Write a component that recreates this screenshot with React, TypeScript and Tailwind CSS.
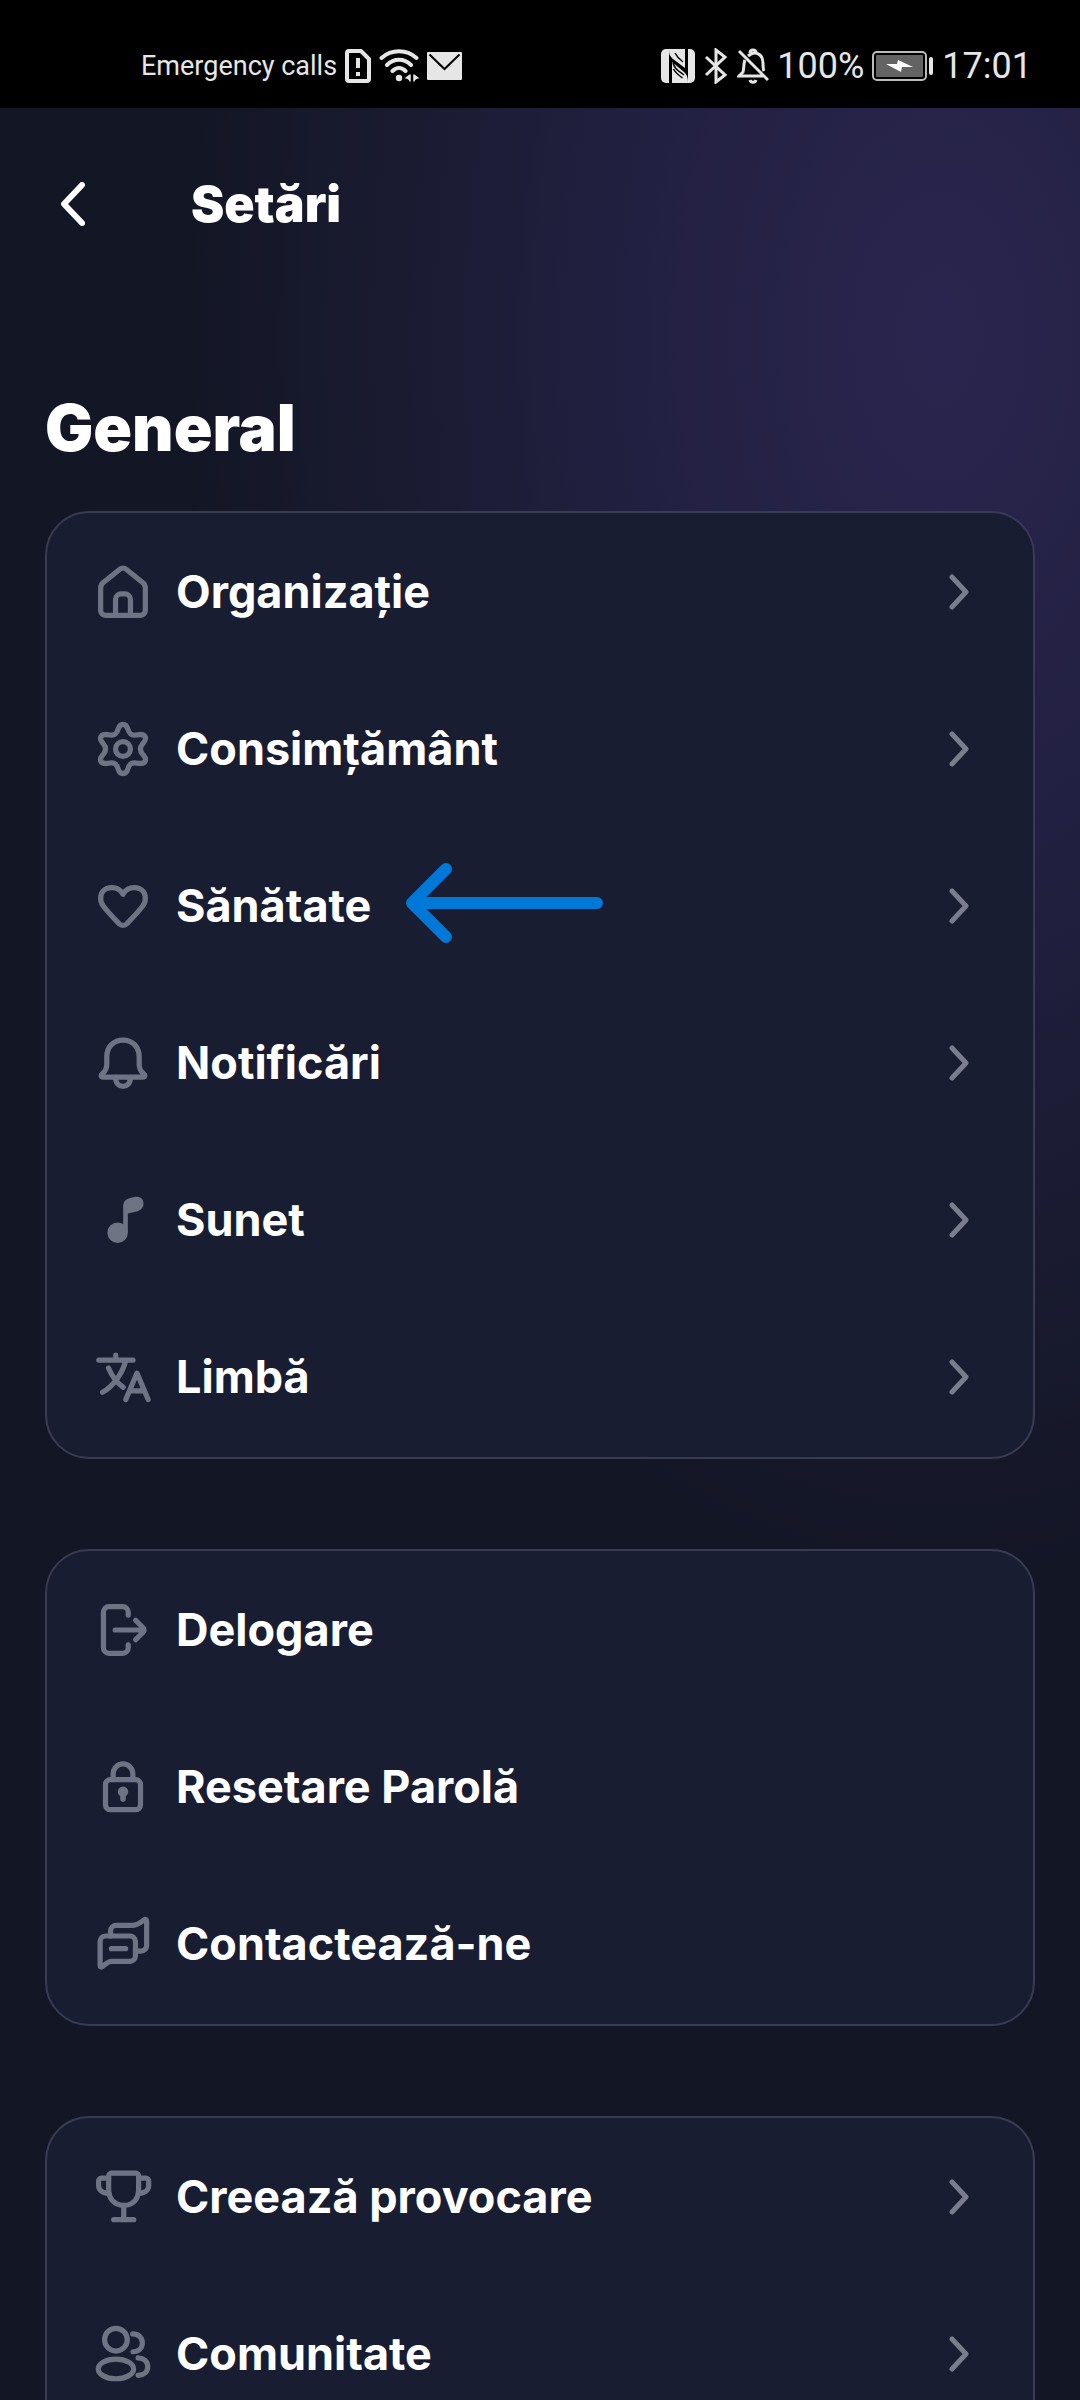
import type { ReactNode } from 'react'

interface Item {
  label: string
  icon: ReactNode
  chevron?: boolean
  marked?: boolean
}

const HomeIcon = () => (
  <>
    <path d="M2.5 24V12.5a4 4 0 0 1 1.3-3l9-7.2a2.6 2.6 0 0 1 3.4 0l9 7.2a4 4 0 0 1 1.3 3v12a2.5 2.5 0 0 1-2.5 2.5H5a2.5 2.5 0 0 1-2.5-2.5Z" />
    <path d="M10.5 27v-8.5a3 3 0 0 1 3-3h2a3 3 0 0 1 3 3V27" />
  </>
)

const GearIcon = () => (
  <>
    <path d="M14.5 1.3c1.6 0 2.1.9 2.6 2.5.8 2.6 1.7 3.6 4.3 3.2 2.3-.4 4.2-.7 5 .9.8 1.5-.2 2.4-1.3 3.7-1.7 2-1.7 3.8 0 5.8 1.100 1.300 2.100 2.200 1.300 3.700-.8 1.600-2.700 1.300-5 .9-2.600-.4-3.500.6-4.300 3.200-.5 1.600-1 2.500-2.600 2.500s-2.100-.9-2.600-2.500c-.8-2.600-1.700-3.600-4.300-3.200-2.300.4-4.200.7-5-.9-.8-1.500.2-2.400 1.300-3.700 1.700-2 1.700-3.800 0-5.800C2.800 10.300 1.800 9.400 2.600 7.900c.8-1.600 2.700-1.300 5-.9 2.600.4 3.500-.6 4.300-3.200.5-1.600 1-2.500 2.600-2.500Z" />
    <circle cx="14.5" cy="14.5" r="4" />
  </>
)

const HeartIcon = () => (
  <path d="M14.5 8.2C12.5 4.400 8.400 4 5.600 5.200c-3.500 1.600-4 6.200-1.700 9.300 2.400 3.200 5.500 6.400 8.500 9.500a2.900 2.900 0 0 0 4.200 0c3-3.100 6.100-6.300 8.500-9.500 2.300-3.100 1.800-7.700-1.700-9.300-2.800-1.200-6.900-.8-8.900 3Z" />
)

const BellIcon = () => (
  <>
    <path d="M14.5 2.200c-5.300 0-8.700 3.800-8.700 9v4c0 2.500-.6 3.500-2 4.700-1.500 1.300-1.300 2.200.2 2.200h21c1.500 0 1.700-.9.200-2.200-1.400-1.200-2-2.200-2-4.700v-4c0-5.200-3.400-9-8.700-9Z" />
    <path d="M10.500 22.200c0 3.300 1.700 4.800 4 4.800s4-1.500 4-4.800" />
  </>
)

const NoteIcon = () => (
  <g fill="currentColor" stroke="none">
    <circle cx="11.600" cy="21.400" r="5.500" />
    <path d="M14.600 21.400V7.300c0-2.600 1.200-4 3.700-4.600l2.300-.5c2.800-.6 4.900.9 4.900 3.500 0 2.300-1.400 3.700-3.600 4.200l-4.800 1.100v10.400Z" />
  </g>
)

const TranslateIcon = () => (
  <>
    <path d="M1.500 5.400h18.400M10.600 2.700v2.700M16 5.400C14.500 12 9.500 19.500 3.500 22.700M6.700 9.700c1.800 4.300 4.300 7.800 7.900 10.300" />
    <path d="M16 26.600 22 12.400l6 14.200M18 22h8" />
  </>
)

const LogoutIcon = () => (
  <>
    <path d="M17.300 6.500V5a3 3 0 0 0-3-3H7a3 3 0 0 0-3 3v19a3 3 0 0 0 3 3h7.300a3 3 0 0 0 3-3v-1.500" />
    <path d="M10.300 14.500h15.500M21.300 9.300l4 4a1.700 1.700 0 0 1 0 2.400l-4 4" />
  </>
)

const LockIcon = () => (
  <>
    <rect x="5.100" y="10.500" width="18.800" height="16.200" rx="2.600" />
    <path d="M9.200 10.500V7.400a5.300 5.300 0 0 1 10.600 0v3.100" />
    <g fill="currentColor" stroke="none">
      <circle cx="14.5" cy="17" r="2.800" />
      <path d="M13 17h3v4a1.500 1.500 0 0 1-3 0Z" />
    </g>
  </>
)

const ChatIcon = () => (
  <>
    <path d="M2.200 26V13.200a3 3 0 0 1 3-3h13a3 3 0 0 1 3 3v7.600a3 3 0 0 1-3 3H8.500c-2.200 0-3.400 1.400-4.900 2.700-.8.700-1.400.3-1.400-.5Z" />
    <path d="M7.800 10.200V7.500a3 3 0 0 1 3-3h8.500c3.200 0 4.500-1.500 6.400-2.900.8-.6 1.500-.2 1.500.7v13a3 3 0 0 1-3 3h-3M8.300 17h7.600" />
  </>
)

const TrophyIcon = () => (
  <>
    <path d="M6.800 3.200a1.500 1.500 0 0 1 1.500-1.500h13.100a1.500 1.500 0 0 1 1.500 1.500v7.200c0 5-2.800 8.600-8 8.600s-8.100-3.600-8.100-8.600ZM14.900 19v7.700M9.500 26.700h10.800" />
    <path d="M6.800 4.400H2.900a1.500 1.500 0 0 0-1.500 1.500v2.300c0 2.500 2 4.300 5.400 4.300M22.900 4.400h3.900a1.500 1.500 0 0 1 1.500 1.500v2.300c0 2.500-2 4.300-5.400 4.300" />
  </>
)

const PeopleIcon = () => (
  <>
    <circle cx="10.700" cy="6.800" r="6.100" />
    <ellipse cx="10.700" cy="22.500" rx="9.500" ry="5.300" />
    <path d="M19.700 3.700c3 0 5.200 2 5.200 4.800s-2 4.800-5 4.800M22.600 16.600c3.200.2 5.200 2 5.200 4.700s-2 4.500-5.200 4.700" />
  </>
)

const general: Item[] = [
  { label: 'Organizație', icon: <HomeIcon />, chevron: true },
  { label: 'Consimțământ', icon: <GearIcon />, chevron: true },
  { label: 'Sănătate', icon: <HeartIcon />, chevron: true, marked: true },
  { label: 'Notificări', icon: <BellIcon />, chevron: true },
  { label: 'Sunet', icon: <NoteIcon />, chevron: true },
  { label: 'Limbă', icon: <TranslateIcon />, chevron: true },
]

const account: Item[] = [
  { label: 'Delogare', icon: <LogoutIcon /> },
  { label: 'Resetare Parolă', icon: <LockIcon /> },
  { label: 'Contactează-ne', icon: <ChatIcon /> },
]

const social: Item[] = [
  { label: 'Creează provocare', icon: <TrophyIcon />, chevron: true },
  { label: 'Comunitate', icon: <PeopleIcon />, chevron: true },
]

const StatusBar = () => (
  <div className="flex h-[108px] shrink-0 items-center justify-between bg-black pt-6 pr-12 pl-[141px] font-[Roboto,sans-serif] text-[#e6e6e6]">
    <div className="flex items-center gap-2">
      <span className="text-[27px] leading-8">Emergency calls</span>
      <svg className="h-[34px] w-[26px]" viewBox="0 0 26 34" fill="none" stroke="currentColor" strokeWidth="4" strokeLinejoin="round">
        <path d="M2 4a2 2 0 0 1 2-2h12l8 8v20a2 2 0 0 1-2 2H4a2 2 0 0 1-2-2Z" />
        <path d="M13 9v10M13 23v4" />
      </svg>
      <svg className="h-[34px] w-10" viewBox="0 0 40 34" fill="none" stroke="currentColor" strokeWidth="4" strokeLinecap="round">
        <path d="M2.500 9c10-9 25-9 35 0M8 16c7-7 17-7 24 0M13.500 22c4-4 9-4 13 0" />
        <circle cx="20" cy="29" r="3.200" fill="currentColor" stroke="none" />
        <path d="m27 29 4-3v6M35 32v-6l4 3" fill="currentColor" strokeWidth="1.500" strokeLinejoin="round" />
      </svg>
      <svg className="h-7 w-[35px]" viewBox="0 0 35 28">
        <rect width="35" height="28" rx="1" fill="currentColor" />
        <path d="m2.500 2.500 15 14.500 15-14.500" fill="none" stroke="#000" strokeWidth="2" />
      </svg>
    </div>
    <div className="flex items-center gap-2">
      <svg className="h-[34px] w-[34px]" viewBox="0 0 34 34">
        <rect width="34" height="34" rx="5" fill="currentColor" />
        {/* black keeps the bold N apart from its rounded tile */}
        <path d="M8 0c0 6 1 7 4 10l12 9V0h3v34c0-6-1-8-4-11L11 13v21H8Z" fill="#000" />
        <path d="M12 13.500c1 5 3 7 11 12.500M12.500 20c2 4 5 6 9 9M14 4c2 4 4 6 8 9" fill="none" stroke="#000" strokeWidth="1.500" />
        <path d="M10.500 1.500c1 5 3 7 13 15" fill="none" stroke="currentColor" strokeWidth="1" />
      </svg>
      <svg className="h-9 w-[26px]" viewBox="4 0 26 36" fill="none" stroke="currentColor" strokeWidth="3">
        <path d="m7 9 19 18-9 7V2l9 7L7 27" />
      </svg>
      <svg className="h-9 w-8" viewBox="1 0 32 36" fill="none" stroke="currentColor" strokeWidth="3">
        <path d="m3 3 29 29M9 12c-1.500 3-1 9-2 12l-4 4h24M12 8c7-6 15-2 15 7 0 4 0 6 1 8" />
        <path d="M14 5c0-4 6-4 6 0M14 32c1 3 5 3 6 0" />
      </svg>
      <span className="text-[36px] leading-10">100%</span>
      <svg className="h-[30px] w-[62px]" viewBox="0 0 62 30">
        <rect x="1" y="1" width="53" height="28" rx="4" fill="none" stroke="#bbb" strokeWidth="2" />
        <rect x="4" y="4" width="47" height="22" rx="1" fill="#636363" />
        <path d="M14 13h11l1-4 15 7H30l-1 5Z" fill="#fff" />
        <rect x="57" y="6" width="4" height="18" rx="2" fill="currentColor" />
      </svg>
      <span className="text-[36px] leading-10">17:01</span>
    </div>
  </div>
)

const Row = ({ item }: { item: Item }) => (
  <li>
    <button type="button" className="flex h-[157px] w-full cursor-pointer items-center px-12 pb-0.5 text-left">
      <svg
        className="mr-[26px] h-[54px] w-[54px] shrink-0 text-[#6f7485]"
        viewBox="0 0 29 29"
        overflow="visible"
        fill="none"
        stroke="currentColor"
        strokeWidth="2.8"
        strokeLinecap="round"
        strokeLinejoin="round"
      >
        {item.icon}
      </svg>
      <span className="text-[45px] leading-15 font-bold">{item.label}</span>
      {item.marked && (
        <svg className="mb-1.5 ml-[34px] h-[82px] w-[198px]" viewBox="0 0 198 82" fill="none" stroke="#0078d7" strokeWidth="12" strokeLinecap="round" strokeLinejoin="round">
          <path d="M192 41H8M41 7 7 41l34 34" />
        </svg>
      )}
      {item.chevron && (
        <svg className="mr-[15px] ml-auto h-9 w-5" viewBox="0 0 20 36" fill="none" stroke="#797d8d" strokeWidth="5" strokeLinecap="round" strokeLinejoin="round">
          <path d="m3 3 14 15L3 33" />
        </svg>
      )}
    </button>
  </li>
)

const Card = ({ items, open = false }: { items: Item[]; open?: boolean }) => (
  <ul
    className={
      open
        ? 'shrink-0 rounded-t-[44px] border-2 border-b-0 border-[#393b52] bg-[#191d32] p-px'
        : 'shrink-0 rounded-[44px] border-2 border-[#393b52] bg-[#191d32] p-px'
    }
  >
    {items.map((item) => (
      <Row key={item.label} item={item} />
    ))}
  </ul>
)

const App = () => (
  <div className="flex h-screen flex-col overflow-hidden bg-[#131625] font-[Inter,sans-serif] text-white">
    <StatusBar />
    <div className="flex min-h-0 flex-1 flex-col bg-[radial-gradient(ellipse_70%_55%_at_87%_10%,#2a254e_0%,#222042_40%,#1a1b31_72%,#131625_100%)] px-[45px]">
      <header className="flex h-48 shrink-0 items-center pl-2">
        <button type="button" aria-label="Înapoi" className="mr-[98px] flex h-14 w-10 cursor-pointer items-center justify-center">
          <svg className="h-11 w-6" viewBox="0 0 24 44" fill="none" stroke="currentColor" strokeWidth="6" strokeLinecap="round" strokeLinejoin="round">
            <path d="M21 3 3 22l18 19" />
          </svg>
        </button>
        <h1 className="text-[50px] leading-15 font-black">Setări</h1>
      </header>
      <main className="flex flex-col gap-[90px]">
        <section>
          <h2 className="pt-[88px] pb-[43px] text-[64px] leading-20 font-black">General</h2>
          <Card items={general} />
        </section>
        <Card items={account} />
        <Card items={social} open />
      </main>
    </div>
  </div>
)

export default App
